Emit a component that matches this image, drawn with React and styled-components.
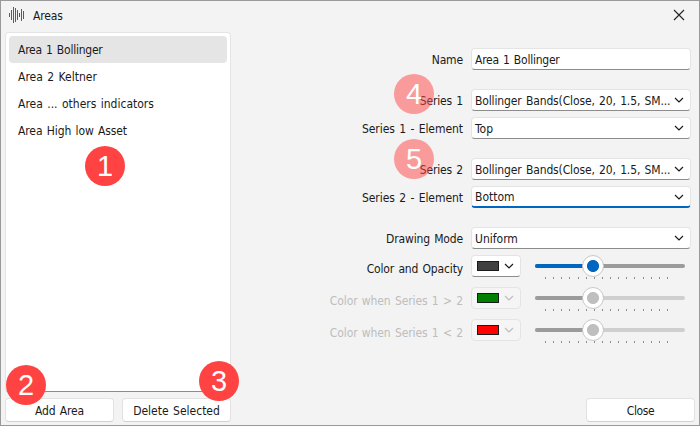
import React, { useState } from 'react';
import styled, { createGlobalStyle } from 'styled-components';

const areas = [
  { name: 'Area 1 Bollinger', spacing: -0.24 },
  { name: 'Area 2 Keltner', spacing: 0 },
  { name: 'Area ... others indicators', spacing: 0 },
  { name: 'Area High low Asset', spacing: -0.1 },
];

const ticks = Array.from({ length: 16 }, (_, i) => i);

function Chevron() {
  return (
    <ChevronIcon width="10" height="6" viewBox="0 0 10 6">
      <path d="M1 1l4 4 4-4" />
    </ChevronIcon>
  );
}

function Select({ value, focused, spacing }) {
  return (
    <Field $focused={focused}>
      <Value $spacing={spacing}>{value}</Value>
      <Chevron />
    </Field>
  );
}

function ColorRow({ label, color, value, disabled, spacing }) {
  return (
    <>
      <Label $disabled={disabled} $spacing={spacing} $drop={2}>{label}</Label>
      <ColorControls>
        <ColorButton disabled={disabled}>
          <Swatch $color={color} />
          <Chevron />
        </ColorButton>
        <Slider>
          <Track $disabled={disabled}>
            <Fill $disabled={disabled} style={{ width: `${value}%` }} />
            <Thumb $disabled={disabled} style={{ left: `${value}%` }} />
          </Track>
          <Ticks>
            {ticks.map((t) => <i key={t} />)}
          </Ticks>
        </Slider>
      </ColorControls>
    </>
  );
}

function App() {
  const [selected, setSelected] = useState(0);

  return (
    <>
      <GlobalStyle />
      <Window>
        <TitleBar>
          <svg width="16" height="16" viewBox="0 0 16 16">
            <path fill="#1d8048" d="M0 6h1v4H0zM2 3h1v10H2zM4 0h1v16H4zM6 1h1v14H6zM8 3h1v10H8zM12 2h1v12h-1zM14 4h1v8h-1z" />
            <path fill="#c02020" d="M10 6h1v4h-1z" />
          </svg>
          <h1>Areas</h1>
          <CloseIcon width="12" height="12" viewBox="0 0 12 12">
            <path d="M1 1l10 10M11 1L1 11" />
          </CloseIcon>
        </TitleBar>

        <Body>
          <Sidebar>
            <List>
              {areas.map((area, i) => (
                <Item
                  key={area.name}
                  $active={i === selected}
                  $spacing={area.spacing}
                  onClick={() => setSelected(i)}
                >
                  {area.name}
                </Item>
              ))}
            </List>
            <Buttons>
              <Button>Add Area</Button>
              <Button $spacing={0}>Delete Selected</Button>
            </Buttons>
          </Sidebar>

          <Main>
            <Form>
              <Label>Name</Label>
              <Field><Value $spacing={-0.24}>Area 1 Bollinger</Value></Field>
              <Gap $size={19} />
              <Label>Series 1</Label>
              <Select value="Bollinger Bands(Close, 20, 1.5, SM..." spacing={-0.13} />
              <Gap $size={6} />
              <Label $spacing={-0.05}>Series 1 - Element</Label>
              <Select value="Top" spacing={0} />
              <Gap $size={19} />
              <Label>Series 2</Label>
              <Select value="Bollinger Bands(Close, 20, 1.5, SM..." spacing={-0.13} />
              <Gap $size={6} />
              <Label $spacing={-0.05}>Series 2 - Element</Label>
              <Select value="Bottom" focused spacing={0} />
              <Gap $size={19} />
              <Label>Drawing Mode</Label>
              <Select value="Uniform" spacing={0} />
              <Gap $size={6} />
              <ColorRow label="Color and Opacity" color="#404040" value={38.7} spacing={-0.15} />
              <Gap $size={10} />
              <ColorRow label="Color when Series 1 > 2" color="#008000" value={38.7} spacing={-0.1} disabled />
              <Gap $size={10} />
              <ColorRow label="Color when Series 1 < 2" color="#ff0000" value={38.7} spacing={-0.1} disabled />
            </Form>
            <Footer>
              <Button $spacing={-0.4}>Close</Button>
            </Footer>
          </Main>
        </Body>

        <Badge $x={85} $y={146}>1</Badge>
        <Badge $x={6} $y={365}>2</Badge>
        <Badge $x={199} $y={361}>3</Badge>
        <Badge $x={394} $y={74} $faded>4</Badge>
        <Badge $x={394} $y={139} $faded>5</Badge>
      </Window>
    </>
  );
}

export default App;

const GlobalStyle = createGlobalStyle`
  * {
    box-sizing: border-box;
  }

  body {
    margin: 0;
    color: #1a1a1a;
    font: 12px/16px 'DejaVu Sans Condensed', 'DejaVu Sans', sans-serif;
    font-stretch: condensed;
    letter-spacing: -0.15px;
    word-spacing: 1px;
  }
`;

const Window = styled.div`
  position: relative;
  display: flex;
  flex-direction: column;
  width: 700px;
  height: 426px;
  border: 1px solid #999;
  background: #f3f3f3;
  overflow: hidden;
`;

const TitleBar = styled.header`
  display: flex;
  align-items: center;
  height: 31px;
  padding: 0 14px 3px 8px;
  flex-shrink: 0;

  h1 {
    flex: 1;
    margin: 0 0 0 8px;
    padding-top: 2px;
    font-size: 12px;
    font-weight: normal;
  }
`;

const CloseIcon = styled.svg`
  fill: none;
  stroke: #222;
  stroke-width: 1.1;
`;

const Body = styled.div`
  display: flex;
  flex: 1;
`;

const Sidebar = styled.aside`
  display: flex;
  flex-direction: column;
  gap: 6px;
  width: 226px;
  margin-left: 4px;
`;

const List = styled.ul`
  height: 360px;
  margin: 0;
  padding: 3px;
  list-style: none;
  background: #fff;
  border: 1px solid #e4e4e4;
  border-bottom-color: #8c8c8c;
  border-radius: 4px;
`;

const Item = styled.li`
  height: 27px;
  padding: 1px 0 0 9px;
  line-height: 26px;
  border-radius: 4px;
  background: ${({ $active }) => ($active ? '#e5e5e5' : 'transparent')};
  letter-spacing: ${({ $spacing }) => $spacing}px;
`;

const Buttons = styled.div`
  display: flex;
  justify-content: space-between;
`;

const Button = styled.button`
  width: 109px;
  height: 24px;
  padding: 1px 0 0;
  color: inherit;
  font: inherit;
  letter-spacing: ${({ $spacing }) => ($spacing === undefined ? 'inherit' : `${$spacing}px`)};
  word-spacing: inherit;
  background: #fff;
  border: 1px solid #e2e2e2;
  border-bottom-color: #d0d0d0;
  border-radius: 4px;
`;

const Main = styled.main`
  display: flex;
  flex-direction: column;
  justify-content: space-between;
  flex: 1;
  padding: 16px 4px 3px 0;
`;

const Form = styled.div`
  display: grid;
  grid-template-columns: 233px 220px;
  column-gap: 7px;
`;

const Gap = styled.div`
  grid-column: 1 / -1;
  height: ${({ $size }) => $size}px;
`;

const Label = styled.label`
  padding-top: ${({ $drop = 0 }) => 1 + $drop}px;
  padding-right: 1px;
  line-height: 22px;
  height: 22px;
  text-align: right;
  white-space: nowrap;
  color: ${({ $disabled }) => ($disabled ? '#bdbdbd' : 'inherit')};
  letter-spacing: ${({ $spacing }) => ($spacing === undefined ? 'inherit' : `${$spacing}px`)};
`;

const Field = styled.div`
  display: flex;
  align-items: center;
  justify-content: space-between;
  height: 22px;
  padding: 0 6px 0 3px;
  background: #fff;
  border: 1px solid #e4e4e4;
  border-bottom: ${({ $focused }) => ($focused ? '2px solid #0067c0' : '1px solid #8c8c8c')};
  border-radius: 4px;
`;

const Value = styled.span`
  white-space: nowrap;
  padding-top: 1px;
  letter-spacing: ${({ $spacing }) => ($spacing === undefined ? 'inherit' : `${$spacing}px`)};
`;

const ChevronIcon = styled.svg`
  flex-shrink: 0;
  fill: none;
  stroke: currentColor;
  stroke-width: 1.15;
`;

const ColorControls = styled.div`
  display: flex;
  gap: 14px;
  height: 22px;
`;

const ColorButton = styled.button`
  display: flex;
  align-items: center;
  justify-content: space-between;
  width: 50px;
  height: 22px;
  padding: 0 6px 0 5px;
  color: ${({ disabled }) => (disabled ? '#bdbdbd' : '#1a1a1a')};
  background: ${({ disabled }) => (disabled ? '#f5f5f5' : '#fff')};
  border: 1px solid #e4e4e4;
  border-bottom-color: ${({ disabled }) => (disabled ? '#e4e4e4' : '#8c8c8c')};
  border-radius: 4px;
`;

const Swatch = styled.span`
  width: 22px;
  height: 10px;
  border: 1px solid #1a1a1a;
  background: ${({ $color }) => $color};
`;

const Slider = styled.div`
  width: 150px;
  padding-top: 9px;
`;

const Track = styled.div`
  position: relative;
  height: 4px;
  border-radius: 2px;
  background: ${({ $disabled }) => ($disabled ? '#cfcfcf' : '#9b9b9b')};
`;

const Fill = styled.div`
  height: 4px;
  border-radius: 2px;
  background: ${({ $disabled }) => ($disabled ? '#9b9b9b' : '#0067c0')};
`;

const Thumb = styled.div`
  position: absolute;
  top: -9px;
  width: 22px;
  height: 22px;
  margin-left: -11px;
  border: 1px solid #c8c8c8;
  border-radius: 50%;
  background: radial-gradient(
    circle,
    ${({ $disabled }) => ($disabled ? '#bfbfbf' : '#0067c0')} 5.6px,
    #fff 6.4px
  );
`;

const Ticks = styled.div`
  display: flex;
  justify-content: space-between;
  margin: 9px 17px 0 10px;

  i {
    width: 1px;
    height: 2px;
    background: #8c8c8c;
  }
`;

const Footer = styled.footer`
  display: flex;
  justify-content: flex-end;
`;

// Numbered callouts floating over the dialog
const Badge = styled.div`
  position: absolute;
  left: ${({ $x }) => $x - 1}px;
  top: ${({ $y }) => $y - 1}px;
  width: 40px;
  height: 40px;
  border-radius: 50%;
  color: #fff;
  background: ${({ $faded }) => ($faded ? 'rgba(255, 67, 67, 0.5)' : '#ff4343')};
  font: 29px/41px 'Liberation Sans', Arial, sans-serif;
  letter-spacing: 0;
  text-align: center;
`;
